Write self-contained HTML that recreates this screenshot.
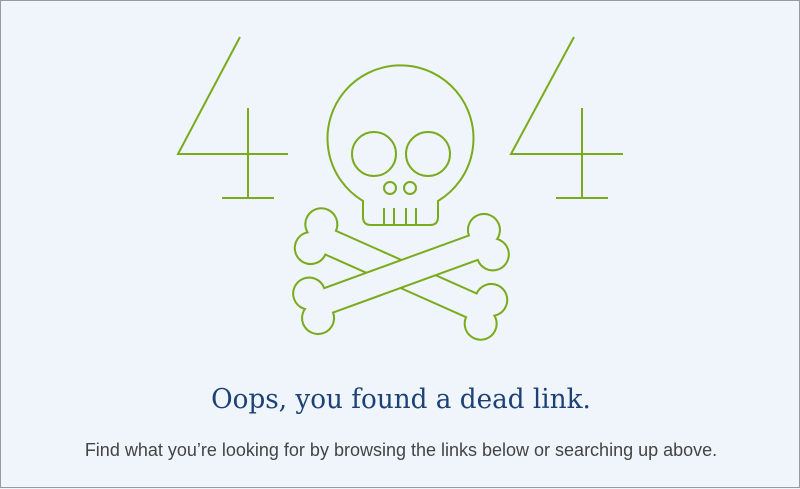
<!DOCTYPE html>
<html><head><meta charset="utf-8"><style>
html,body{margin:0;padding:0}
body{width:800px;height:488px;background:#eff5fb;position:relative;overflow:hidden;box-sizing:border-box;border:1px solid #9a9a9a}
svg{position:absolute;left:0;top:0}
.t1{position:absolute;left:0;width:800px;top:383px;text-align:center;font-family:"DejaVu Serif","Liberation Serif",serif;font-size:25px;color:#1d4177;white-space:nowrap;transform:scaleX(1.05) scaleY(1.1)}
.t2{position:absolute;left:0;width:800px;top:439px;text-align:center;font-family:"Liberation Sans",sans-serif;font-size:18px;color:#444;white-space:nowrap}
</style></head><body>
<svg width="800" height="488" viewBox="0 0 800 488">
<defs>
<g id="bone">
<rect x="-92" y="-12" width="184" height="24"/>
<circle cx="-93" cy="-13" r="15"/><circle cx="-93" cy="13" r="15"/>
<circle cx="93" cy="-13" r="15"/><circle cx="93" cy="13" r="15"/>
</g>
</defs>
<g fill="none" stroke="#7aab1c" stroke-width="2">
<path d="M239 36 L177 153 L287 153 M247 107 L247 197 M221 197 L273 197"/>
<path d="M573 36 L510 153 L622 153 M581 107 L581 197 M555 197 L607 197"/>
</g>
<g transform="translate(400,273) rotate(24)">
<use href="#bone" fill="#7aab1c" stroke="#7aab1c" stroke-width="4"/>
<use href="#bone" fill="#eff5fb"/>
</g>
<g transform="translate(400,273) rotate(-20)">
<use href="#bone" fill="#7aab1c" stroke="#7aab1c" stroke-width="4"/>
<use href="#bone" fill="#eff5fb"/>
</g>
<g fill="none" stroke="#7aab1c" stroke-width="2">
<path d="M362 200 A73 73 0 1 1 437 200 L437 216 Q437 224 429 224 L370 224 Q362 224 362 216 Z" fill="#eff5fb"/>
<circle cx="373" cy="153" r="22"/><circle cx="427" cy="153" r="22"/>
<circle cx="389" cy="187" r="6"/><circle cx="409" cy="187" r="6"/>
<path d="M383 207V224M393 207V224M405 207V224M415 207V224"/>
</g>
</svg>
<div class="t1">Oops, you found a dead link.</div>
<div class="t2">Find what you’re looking for by browsing the links below or searching up above.</div>
</body></html>
